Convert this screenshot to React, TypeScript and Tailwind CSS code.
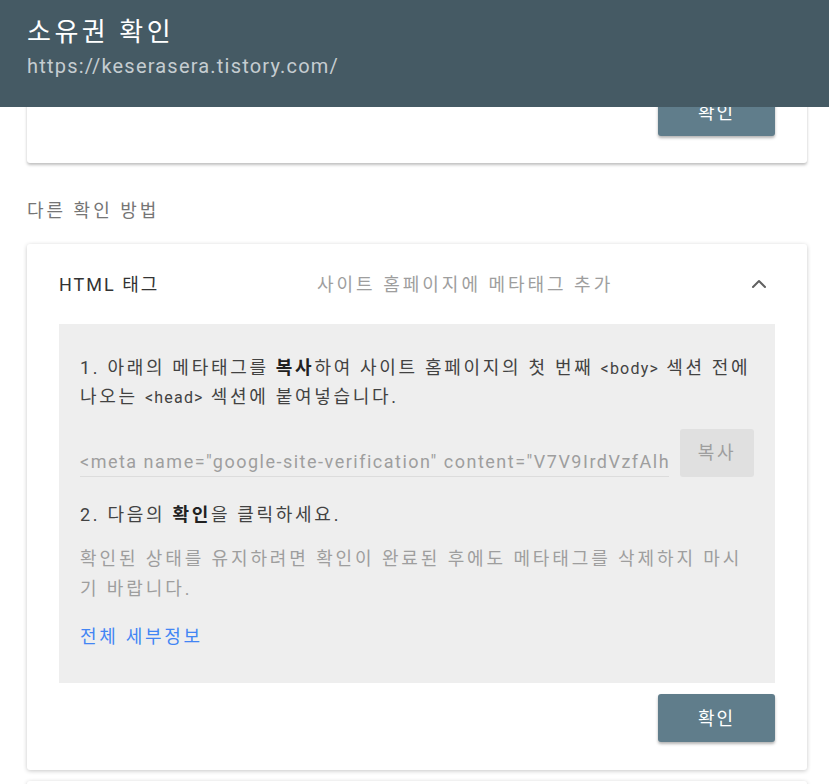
import { ChevronUp } from "lucide-react";

const font = "font-['Roboto','Noto_Sans_CJK_KR',sans-serif]";

const ConfirmButton = () => (
  <button className="h-[48px] w-[117px] rounded-[3px] bg-[#607d8b] text-[18px] tracking-[2px] text-white shadow-[0_2px_3px_rgba(0,0,0,0.3)]">
    확인
  </button>
);

export default function App() {
  return (
    <div className={`relative min-h-screen overflow-hidden bg-white ${font}`}>
      <header className="absolute inset-x-0 top-0 z-10 h-[107px] bg-[#455a64] px-[27px] pt-[14px]">
        <h1 className="text-[26px] leading-[36px] tracking-[3.5px] text-white">소유권 확인</h1>
        <p className="mt-[2px] text-[20px] leading-[28px] tracking-[1.2px] text-[#c5cdd1]">https://keserasera.tistory.com/</p>
      </header>

      <main className="pl-[27px] pr-[22px]">
        <div className="flex h-[163px] items-end justify-end rounded-b-[3px] bg-white px-8 pb-[27px] shadow-[0_2px_3px_rgba(0,0,0,0.25)]">
          <ConfirmButton />
        </div>

        <h2 className="mt-[34px] mb-[19px] text-[18px] leading-[28px] tracking-[3px] text-[#757575]">다른 확인 방법</h2>

        <section className="rounded-[3px] bg-white px-8 pb-[28px] shadow-[0_1px_4px_rgba(0,0,0,0.22)]">
          <div className="flex h-[80px] items-center text-[18px]">
            <span className="w-[258px] tracking-[2px] text-[#333]">HTML 태그</span>
            <span className="flex-1 tracking-[3px] text-[#9e9e9e]">사이트 홈페이지에 메타태그 추가</span>
            <ChevronUp className="mr-1 h-6 w-6 text-[#616161]" strokeWidth={2} />
          </div>

          <div className="bg-[#eeeeee] px-[21px] pt-[30px] pb-[32px] text-[18px] leading-[28px] tracking-[2.7px] text-[#424242]">
            <p className="whitespace-nowrap">
              1. 아래의 메타태그를 <b className="text-[#212121]">복사</b>하여 사이트 홈페이지의 첫 번째{" "}
              <span className="text-[16px] tracking-[1.2px]">&lt;body&gt;</span> 섹션 전에
              <br />
              나오는 <span className="text-[16px] tracking-[1.2px]">&lt;head&gt;</span> 섹션에 붙여넣습니다.
            </p>

            <div className="mt-[17px] flex items-center gap-[11px]">
              <div className="flex h-[48px] min-w-0 flex-1 items-end">
                <input
                  readOnly
                  value={'<meta name="google-site-verification" content="V7V9IrdVzfAlhQx2Kp" />'}
                  className="w-full min-w-0 border-b border-[#dcdcdc] bg-transparent pb-[1px] text-[18px] leading-[26px] tracking-[1.5px] text-[#9e9e9e] outline-none"
                />
              </div>
              <button className="h-[48px] w-[74px] shrink-0 rounded-[3px] bg-[#e0e0e0] text-[18px] text-[#9e9e9e]">복사</button>
            </div>

            <p className="mt-[24px]">
              2. 다음의 <b className="text-[#212121]">확인</b>을 클릭하세요.
            </p>
            <p className="mt-[15px] whitespace-nowrap leading-[30px] tracking-[2.9px] text-[#9e9e9e]">
              확인된 상태를 유지하려면 확인이 완료된 후에도 메타태그를 삭제하지 마시
              <br />기 바랍니다.
            </p>
            <a href="#" className="mt-[19px] block text-[#4285f4]">전체 세부정보</a>
          </div>

          <div className="mt-[11px] flex justify-end">
            <ConfirmButton />
          </div>
        </section>

        <div className="mt-[11px] h-[60px] rounded-[3px] bg-white shadow-[0_1px_4px_rgba(0,0,0,0.22)]" />
      </main>
    </div>
  );
}
